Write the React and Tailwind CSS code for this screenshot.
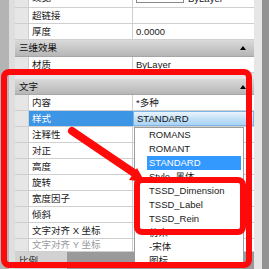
import React from "react";

function Row({ label, value, h = "h-[16px]", labelCls = "text-[#1a1a1a]" }) {
  return (
    <div className={`flex ${h} shrink-0 border-b border-[#cfcfcf] bg-white`}>
      <div className="w-[14px] shrink-0 bg-[#e6e6e6] border-r border-[#cfcfcf]" />
      <div className={`w-[104px] shrink-0 flex items-center pl-[3px] border-r border-[#cfcfcf] whitespace-nowrap overflow-hidden ${labelCls}`}>
        {label}
      </div>
      <div className="flex-1 flex items-center pl-[3px] whitespace-nowrap overflow-hidden text-[#1a1a1a]">
        {value}
      </div>
    </div>
  );
}

function Header({ title, h = "h-[16px]" }) {
  return (
    <div className={`flex ${h} shrink-0 items-center justify-between pl-[4px] pr-[8px] bg-[linear-gradient(#dadada,#b6b6b6)] border-b border-[#a6a6a6] text-[#111]`}>
      <span>{title}</span>
      <span className="w-0 h-0 border-l-[3px] border-r-[3px] border-b-[4px] border-l-transparent border-r-transparent border-b-black" />
    </div>
  );
}

const items = [
  "ROMANS",
  "ROMANT",
  "STANDARD",
  "Style_黑体",
  "TSSD_Dimension",
  "TSSD_Label",
  "TSSD_Rein",
  "仿宋",
  "-宋体",
  "图标",
];

export default function App() {
  return (
    <div className="relative w-[269px] h-[269px] overflow-hidden flex bg-white font-['Liberation_Sans','Noto_Sans_CJK_SC',sans-serif] text-[9.5px] leading-none">
      <div className="w-[9px] shrink-0 bg-[#b4b4b4]" />
      <div className="w-[6px] shrink-0 bg-[#dedede]" />
      <div className="w-[239px] shrink-0 flex flex-col -mt-[8px]">
        <Row
          label={<span className="-mt-[3px]">线宽</span>}
          value={
            <div className="flex items-start gap-[4px] self-start">
              <span className="w-[48px] h-[10px] mt-[1px] border border-[#8a8a8a] bg-white" />
              <span className="mt-[2px]">ByLayer</span>
            </div>
          }
        />
        <Row label="超链接" value="" />
        <Row label="厚度" value="0.0000" />
        <Header title="三维效果" h="h-[17px]" />
        <Row label="材质" value="ByLayer" />
        <div className="h-[6px] shrink-0 bg-[#e8e8e8]" />
        <Header title="文字" />
        <Row label="内容" value="*多种" />
        <div className="flex h-[16px] shrink-0 border-b border-[#cfcfcf] bg-white">
          <div className="w-[14px] shrink-0 bg-[#e6e6e6] border-r border-[#cfcfcf]" />
          <div className="w-[104px] shrink-0 flex items-center pl-[3px] bg-[#3d95e6] text-white">样式</div>
          <div className="flex-1 flex items-center pl-[3px] border border-[#7fb2e5] bg-[linear-gradient(#eaf4fd,#c4e1f8_50%,#a9d3f4)] text-[#111]">
            STANDARD
          </div>
        </div>
        <Row label="注释性" value="" />
        <Row label="对正" value="" />
        <Row label="高度" value="" />
        <Row label="旋转" value="" />
        <Row label="宽度因子" value="" />
        <Row label="倾斜" value="" />
        <Row label="文字对齐 X 坐标" value="" />
        <Row label="文字对齐 Y 坐标" value="" h="h-[13px]" labelCls="text-[#9a9a9a]" />
        <div className="flex h-[17px] shrink-0">
          <div className="w-[52px] shrink-0 bg-[#d2d2d2] flex items-center pl-[4px] text-[#333]">比例</div>
          <div className="flex-1 bg-[#9a9a9a]" />
        </div>
      </div>
      <div className="w-[8px] shrink-0 bg-[#e6e6e6]" />
      <div className="w-[7px] shrink-0 bg-[#939393]" />

      {/* dropdown list */}
      <div className="absolute left-[134px] top-[127px] w-[110px] h-[142px] bg-white border border-[#9c9c9c] flex flex-col text-[#1a1a1a]">
        {items.map((t) => (
          <div
            key={t}
            className={
              t === "STANDARD"
                ? "h-[14px] shrink-0 ml-[12px] mr-[2px] pl-[2px] flex items-center bg-[#3399ff] text-white"
                : "h-[14px] shrink-0 ml-[12px] mr-[2px] pl-[2px] flex items-center whitespace-nowrap"
            }
          >
            {t}
          </div>
        ))}
      </div>

      {/* red highlight boxes */}
      <div className="absolute left-[1px] top-[69px] w-[251px] h-[199px] border-[6px] border-[#ff0a0a] rounded-[8px]" />
      <div className="absolute left-[134px] top-[177px] w-[112px] h-[58px] border-[6px] border-[#ff0a0a] rounded-[8px]" />

      {/* arrow */}
      <svg className="absolute left-0 top-0" width="269" height="269" viewBox="0 0 269 269">
        <line x1="72" y1="131" x2="134" y2="173" stroke="#ff0a0a" strokeWidth="8" strokeLinecap="round" />
        <polygon points="145,182 129,180 137,168" fill="#ff0a0a" />
      </svg>
    </div>
  );
}
